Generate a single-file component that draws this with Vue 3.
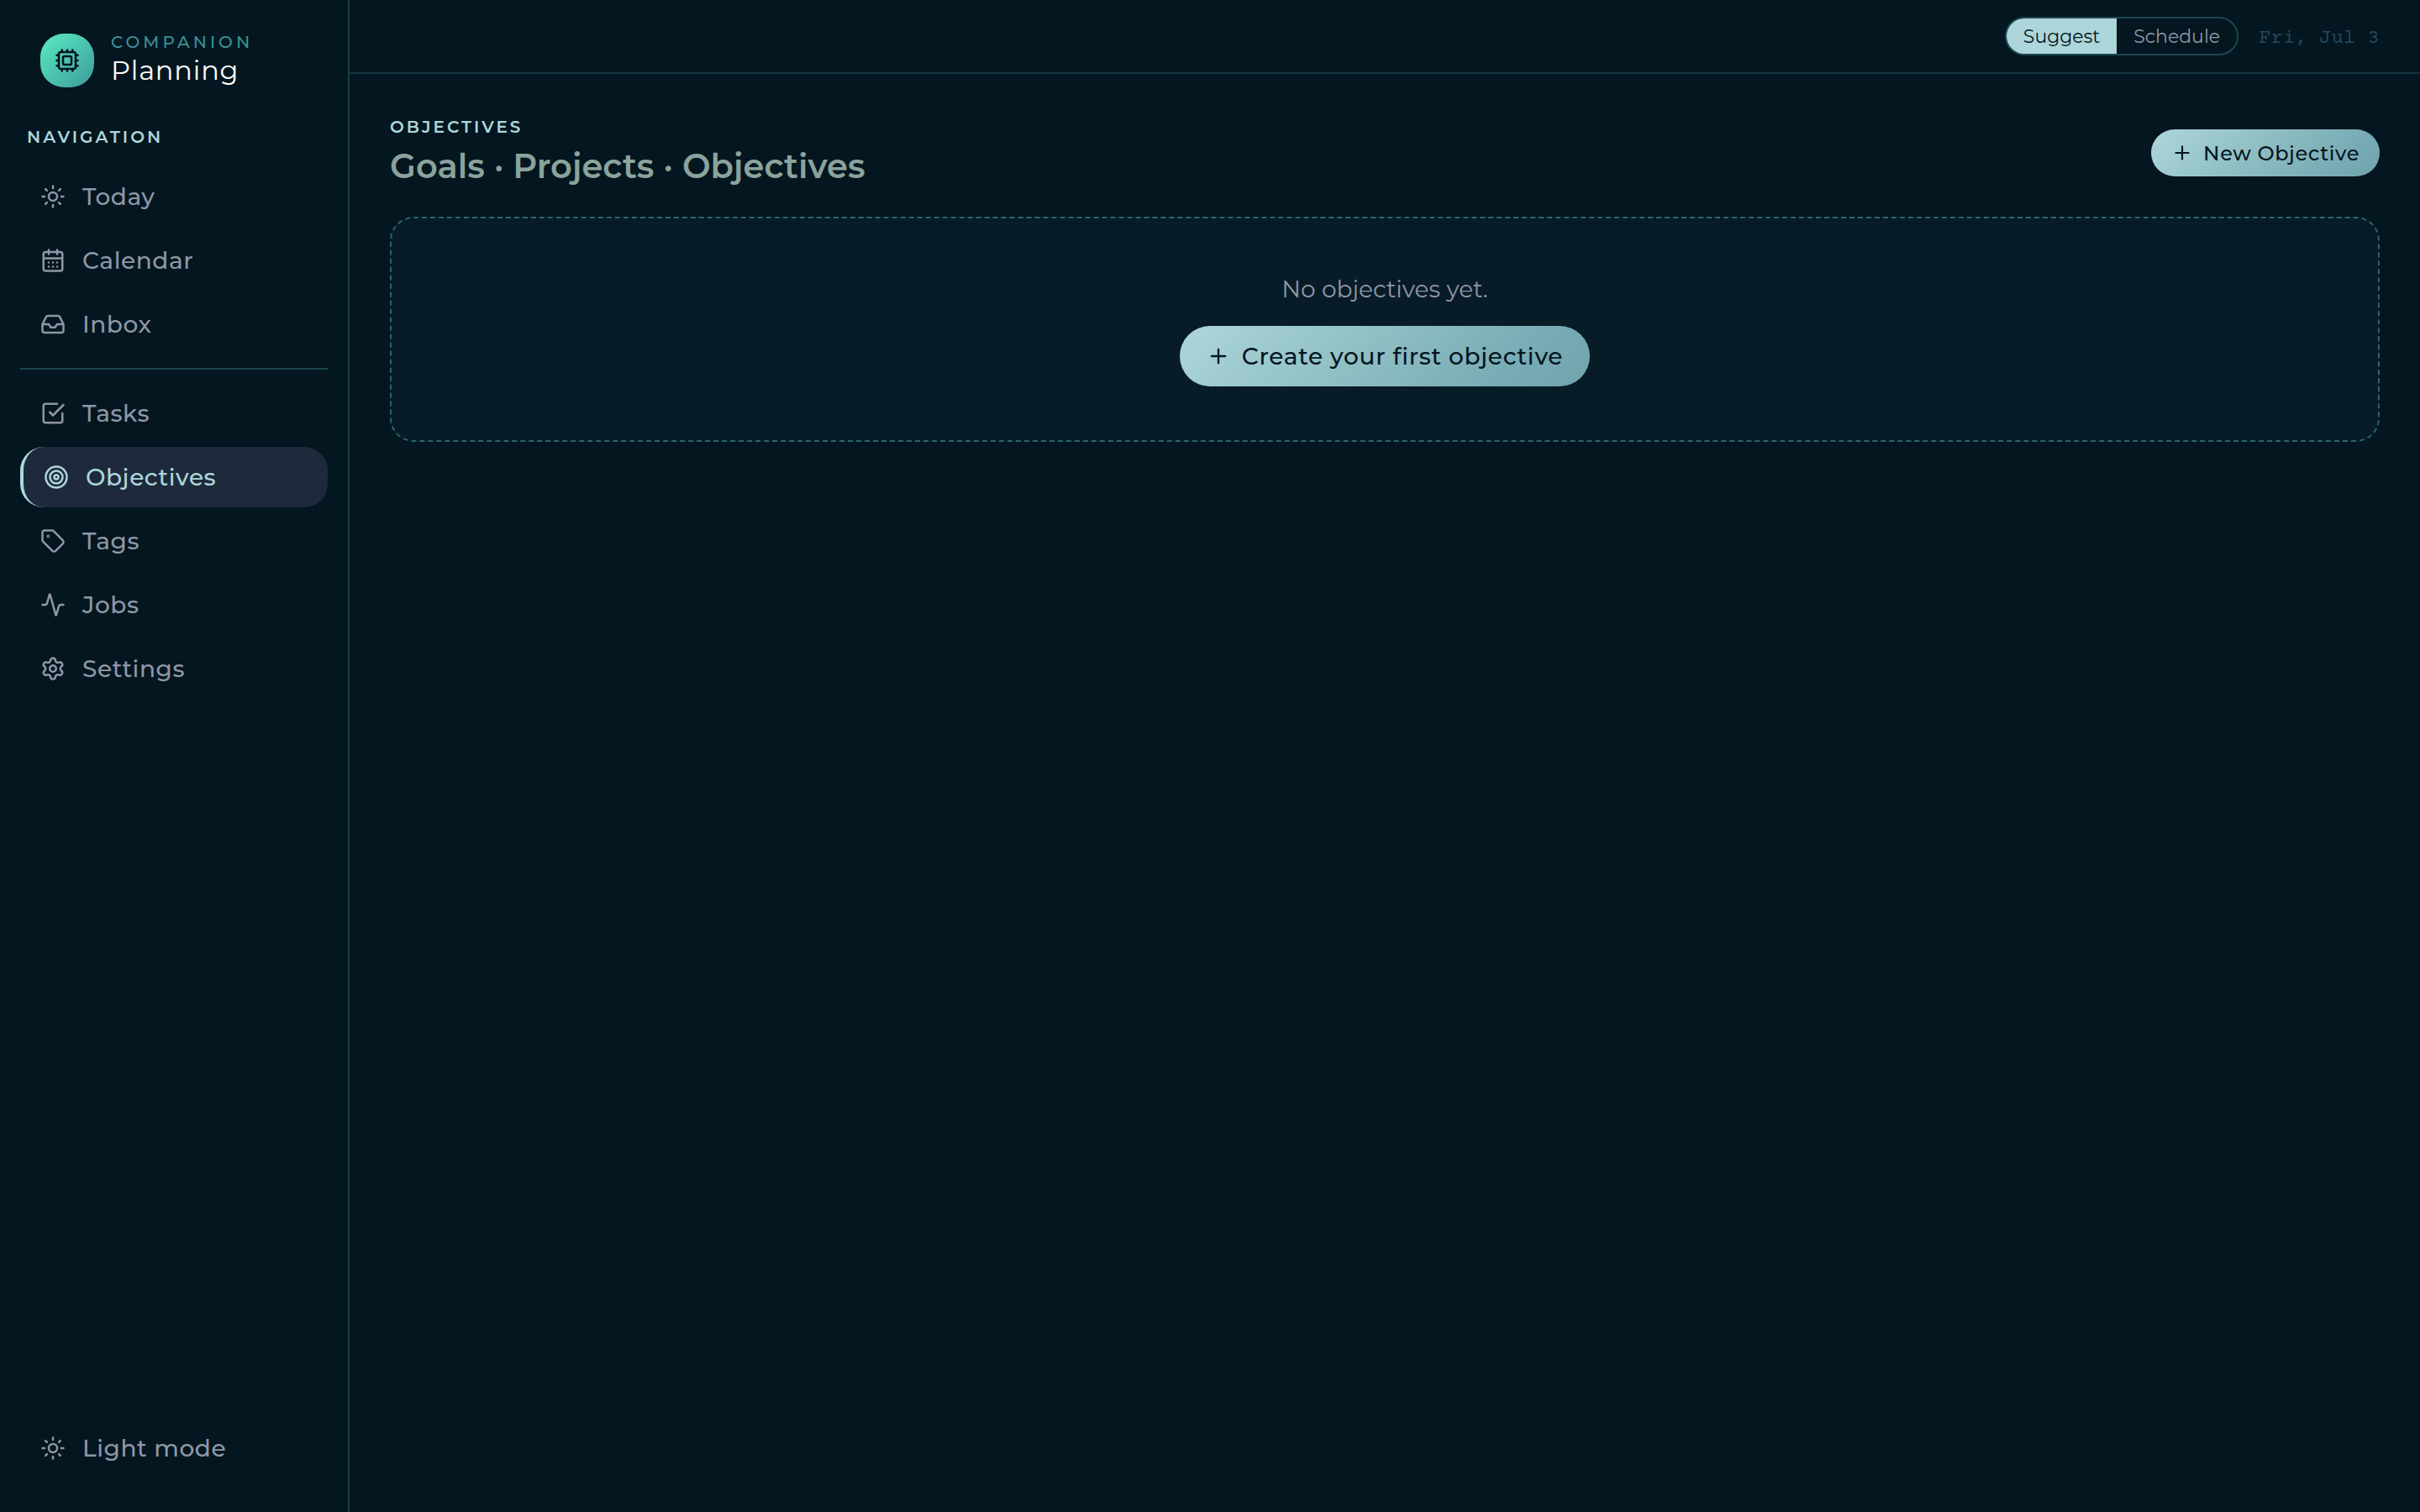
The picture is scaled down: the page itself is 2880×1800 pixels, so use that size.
<template>
  <div class="layout">
    <aside class="sidebar">
      <div class="brand">
        <div class="brand-logo">
          <svg class="icon" viewBox="0 0 24 24">
            <rect x="4" y="4" width="16" height="16" rx="2" />
            <rect x="8" y="8" width="8" height="8" rx="1" />
            <path d="M7 2v2M12 2v2M17 2v2M7 20v2M12 20v2M17 20v2M2 7h2M2 12h2M2 17h2M20 7h2M20 12h2M20 17h2" />
          </svg>
        </div>
        <div class="brand-text">
          <span class="brand-eyebrow">Companion</span>
          <span class="brand-name">Planning</span>
        </div>
      </div>

      <h2 class="nav-title">Navigation</h2>
      <nav class="nav">
        <template v-for="item in navItems" :key="item.label">
          <hr v-if="item.divider" class="nav-divider" />
          <a
            href="#"
            class="nav-link"
            :class="{ active: active === item.label }"
            @click.prevent="active = item.label"
          >
            <svg class="icon" viewBox="0 0 24 24"><path :d="item.icon" /></svg>
            <span>{{ item.label }}</span>
          </a>
        </template>
      </nav>

      <button class="nav-link theme-btn" type="button">
        <svg class="icon" viewBox="0 0 24 24"><path :d="sunIcon" /></svg>
        <span>Light mode</span>
      </button>
    </aside>

    <div class="content">
      <header class="topbar">
        <div class="mode-toggle">
          <button
            v-for="m in modes"
            :key="m"
            type="button"
            class="mode-btn"
            :class="{ selected: mode === m }"
            @click="mode = m"
          >{{ m }}</button>
        </div>
        <time class="date">Fri, Jul 3</time>
      </header>

      <main class="main">
        <div class="page-head">
          <div>
            <p class="eyebrow">Objectives</p>
            <h1 class="page-title">Goals · Projects · Objectives</h1>
          </div>
          <button class="primary-btn small" type="button">
            <svg class="icon icon-plus" viewBox="0 0 24 24"><path d="M5 12h14M12 5v14" /></svg>
            <span>New Objective</span>
          </button>
        </div>

        <section class="empty-card">
          <p class="empty-text">No objectives yet.</p>
          <button class="primary-btn" type="button">
            <svg class="icon icon-plus" viewBox="0 0 24 24"><path d="M5 12h14M12 5v14" /></svg>
            <span>Create your first objective</span>
          </button>
        </section>
      </main>
    </div>
  </div>
</template>

<script setup>
import { ref } from 'vue'

const sunIcon = 'M16 12a4 4 0 1 1-8 0 4 4 0 0 1 8 0zM12 2v2M12 20v2M4.93 4.93l1.41 1.41M17.66 17.66l1.41 1.41M2 12h2M20 12h2M6.34 17.66l-1.41 1.41M19.07 4.93l-1.41 1.41'

const navItems = [
  { label: 'Today', icon: sunIcon },
  { label: 'Calendar', icon: 'M8 2v4M16 2v4M5 4h14a2 2 0 0 1 2 2v14a2 2 0 0 1-2 2H5a2 2 0 0 1-2-2V6a2 2 0 0 1 2-2zM3 10h18M8 14h.01M12 14h.01M16 14h.01M8 18h.01M12 18h.01M16 18h.01' },
  { label: 'Inbox', icon: 'M22 12h-6l-2 3h-4l-2-3H2M5.45 5.11L2 12v6a2 2 0 0 0 2 2h16a2 2 0 0 0 2-2v-6l-3.45-6.89A2 2 0 0 0 16.76 4H7.24a2 2 0 0 0-1.79 1.11z' },
  { label: 'Tasks', divider: true, icon: 'M9 11l3 3L22 4M21 12v7a2 2 0 0 1-2 2H5a2 2 0 0 1-2-2V5a2 2 0 0 1 2-2h11' },
  { label: 'Objectives', icon: 'M22 12a10 10 0 1 1-20 0 10 10 0 0 1 20 0zM18 12a6 6 0 1 1-12 0 6 6 0 0 1 12 0zM14 12a2 2 0 1 1-4 0 2 2 0 0 1 4 0z' },
  { label: 'Tags', icon: 'M12.586 2.586A2 2 0 0 0 11.172 2H4a2 2 0 0 0-2 2v7.172a2 2 0 0 0 .586 1.414l8.704 8.704a2.426 2.426 0 0 0 3.42 0l6.58-6.58a2.426 2.426 0 0 0 0-3.42zM8 7.5a.5.5 0 1 1-1 0 .5.5 0 0 1 1 0z' },
  { label: 'Jobs', icon: 'M22 12h-2.48a2 2 0 0 0-1.93 1.46l-2.35 8.36a.25.25 0 0 1-.48 0L9.24 2.18a.25.25 0 0 0-.48 0l-2.35 8.36A2 2 0 0 1 4.49 12H2' },
  { label: 'Settings', icon: 'M9.671 4.136a2.34 2.34 0 0 1 4.659 0 2.34 2.34 0 0 0 3.319 1.915 2.34 2.34 0 0 1 2.33 4.033 2.34 2.34 0 0 0 0 3.831 2.34 2.34 0 0 1-2.33 4.033 2.34 2.34 0 0 0-3.319 1.915 2.34 2.34 0 0 1-4.659 0 2.34 2.34 0 0 0-3.32-1.915 2.34 2.34 0 0 1-2.33-4.033 2.34 2.34 0 0 0 0-3.831A2.34 2.34 0 0 1 6.35 6.051a2.34 2.34 0 0 0 3.319-1.915M15 12a3 3 0 1 1-6 0 3 3 0 0 1 6 0z' }
]

const active = ref('Objectives')
const modes = ['Suggest', 'Schedule']
const mode = ref('Suggest')
</script>

<style>
body {
  background: #04161f;
}
</style>

<style scoped>
.layout {
  display: flex;
  min-height: 100vh;
  background: #04161f;
  color: #8f96a6;
  font-family: Montserrat, Inter, "Open Sans", sans-serif;
}
.layout * {
  box-sizing: border-box;
}
button {
  font-family: inherit;
  border: none;
  background: none;
  cursor: pointer;
}
.icon {
  width: 30px;
  height: 30px;
  flex: none;
  fill: none;
  stroke: currentColor;
  stroke-width: 2;
  stroke-linecap: round;
  stroke-linejoin: round;
}
.sidebar {
  display: flex;
  flex-direction: column;
  flex: none;
  width: 416px;
  padding: 32px 24px 40px;
  border-right: 2px solid #1a3f47;
}
.brand {
  display: flex;
  align-items: center;
  gap: 20px;
  height: 80px;
  padding: 0 24px;
}
.brand-logo {
  display: flex;
  align-items: center;
  justify-content: center;
  width: 64px;
  height: 64px;
  border-radius: 28px;
  background: linear-gradient(135deg, #5eead4, #56e4be 10%, #3f9a9c);
  color: #04161f;
}
.brand-text {
  display: flex;
  flex-direction: column;
}
.brand-eyebrow {
  font-size: 20px;
  line-height: 24px;
  font-weight: 500;
  letter-spacing: 4px;
  text-transform: uppercase;
  color: #3a9295;
}
.brand-name {
  font-size: 32px;
  line-height: 44px;
  color: #fff;
  letter-spacing: 0.025em;
}
.nav-title {
  margin: 36px 0 20px;
  padding: 0 8px;
  font-size: 20px;
  line-height: 30px;
  font-weight: 600;
  letter-spacing: 3px;
  text-transform: uppercase;
  color: #add6da;
}
.nav {
  display: flex;
  flex-direction: column;
  gap: 4px;
}
.nav-divider {
  width: 100%;
  height: 2px;
  margin: 12px 0;
  border: none;
  background: #1a474e;
}
.nav-link {
  display: flex;
  align-items: center;
  gap: 20px;
  height: 72px;
  padding: 0 24px;
  border-radius: 28px;
  font-size: 28px;
  font-weight: 500;
  letter-spacing: 0.02em;
  color: #8f96a6;
  text-decoration: none;
}
.nav-link.active {
  border-left: 4px solid #add6da;
  background: #1e293b;
  color: #add6da;
}
.theme-btn {
  margin-top: auto;
}
.content {
  flex: 1;
  min-width: 0;
}
.topbar {
  display: flex;
  align-items: baseline;
  justify-content: flex-end;
  gap: 24px;
  height: 88px;
  padding: 20px 48px;
  border-bottom: 2px solid #15363f;
}
.mode-toggle {
  display: flex;
  height: 46px;
  border: 2px solid #1c474e;
  border-radius: 24px;
  overflow: hidden;
}
.mode-btn {
  padding: 0 20px;
  font-size: 22px;
  color: #8f96a6;
}
.mode-btn.selected {
  background: #add6da;
  color: #04161f;
}
.date {
  font-family: "Courier Prime", "Liberation Mono", monospace;
  font-size: 24px;
  color: #24485c;
}
.main {
  padding: 48px;
}
.page-head {
  display: flex;
  align-items: center;
  justify-content: space-between;
  margin-bottom: 30px;
}
.eyebrow {
  margin: 0 0 2px;
  font-size: 20px;
  line-height: 30px;
  font-weight: 600;
  letter-spacing: 3px;
  text-transform: uppercase;
  color: #add6da;
}
.page-title {
  margin: 0;
  font-size: 40px;
  line-height: 60px;
  font-weight: 600;
  color: #8aa39c;
}
.primary-btn {
  display: inline-flex;
  align-items: center;
  gap: 14px;
  height: 72px;
  padding: 0 32px;
  border-radius: 36px;
  background: linear-gradient(135deg, #add6da, #88b9be 55%, #78abb6 80%, #70a4ac);
  font-size: 28px;
  font-weight: 500;
  letter-spacing: 0.025em;
  color: #04161f;
}
.primary-btn.small {
  gap: 12px;
  height: 56px;
  padding: 0 24px;
  border-radius: 28px;
  font-size: 24px;
}
.icon-plus {
  width: 28px;
  height: 28px;
}
.small .icon-plus {
  width: 26px;
  height: 26px;
}
.empty-card {
  display: flex;
  flex-direction: column;
  align-items: center;
  gap: 24px;
  padding: 64px;
  border: 2px dashed #2a656b;
  border-radius: 28px;
  background: #081c27;
}
.empty-text {
  margin: 0;
  font-size: 28px;
  line-height: 40px;
}
</style>
